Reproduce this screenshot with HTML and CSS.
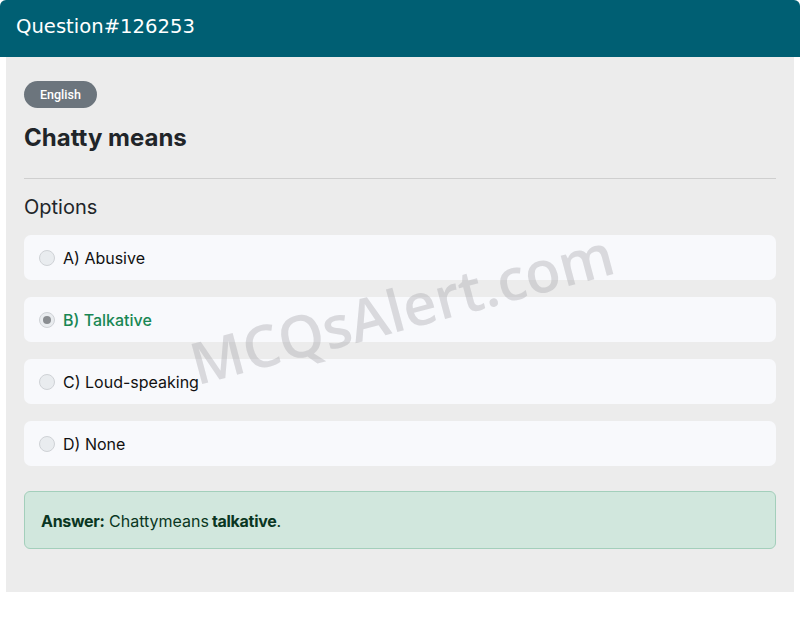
FILE: index.html
```html
<!DOCTYPE html>
<html lang="en">
<head>
<meta charset="utf-8">
<title>Question#126253</title>
<link rel="stylesheet" href="styles.css">
</head>
<body>
<div class="card">
  <div class="card-header">Question#126253</div>
  <div class="card-body">
    <span class="badge">English</span>
    <h1 class="title">Chatty means</h1>
    <hr class="rule">
    <h2 class="subtitle">Options</h2>
    <div class="options">
      <div class="option"><span class="radio"></span><span class="label">A) Abusive</span></div>
      <div class="option correct"><span class="radio checked"></span><span class="label">B) Talkative</span></div>
      <div class="option"><span class="radio"></span><span class="label">C) Loud-speaking</span></div>
      <div class="option"><span class="radio"></span><span class="label">D) None</span></div>
    </div>
    <div class="answer"><strong>Answer:</strong>&nbsp;Chattymeans<strong class="gap">talkative</strong>.</div>
    <div class="watermark">MCQsAlert.com</div>
  </div>
</div>
</body>
</html>
```
FILE: styles.css
```css
* { box-sizing: border-box; }
html, body { margin: 0; padding: 0; background: #fff; }
body { font-family: "Inter", "DejaVu Sans", sans-serif; color: #212529; }

.card { width: 800px; position: relative; }

.card-header {
  height: 57px;
  background: #005f73;
  color: #fff;
  font-family: "DejaVu Sans", sans-serif;
  font-size: 19.6px;
  padding: 15px 16px 0;
  border-radius: 6px 6px 0 0;
}

.card-body {
  position: relative;
  margin: 0 6px;
  background: #ececec;
  padding: 24px 18px 43px;
  overflow: hidden;
}

.badge {
  display: inline-block;
  background: #6c757d;
  color: #fff;
  font-family: "Roboto", sans-serif;
  font-weight: 500;
  font-size: 12.5px;
  height: 27px;
  line-height: 27px;
  padding: 0 16px;
  border-radius: 14px;
}

.title {
  margin: 14px 0 0;
  font-size: 24px;
  font-weight: 700;
  line-height: 32px;
  color: #212529;
}

.rule {
  margin: 24px 0 0;
  border: 0;
  border-top: 1px solid #cfcfcf;
}

.subtitle {
  margin: 15px 0 0;
  font-size: 20px;
  font-weight: 400;
  line-height: 26px;
}

.options {
  margin-top: 15px;
  display: flex;
  flex-direction: column;
  gap: 17px;
}

.option {
  height: 45px;
  background: #f8f9fc;
  border-radius: 7px;
  display: flex;
  align-items: center;
  padding-left: 15px;
  gap: 8px;
  font-size: 16px;
  color: #111;
}

.radio {
  width: 16px;
  height: 16px;
  border-radius: 50%;
  border: 1px solid #cfd2d6;
  background: #e9ecef;
  position: relative;
  flex: none;
}
.radio.checked::after {
  content: "";
  position: absolute;
  left: 3px; top: 3px;
  width: 8px; height: 8px;
  border-radius: 50%;
  background: #8a8d91;
}

.option.correct .label { color: #198754; font-weight: 500; }

.answer {
  margin-top: 25px;
  height: 58px;
  background: #d1e7dd;
  border: 1px solid #a3cfbb;
  border-radius: 6px;
  color: #0a3622;
  font-size: 16px;
  display: flex;
  align-items: center;
  padding-left: 16px;
  padding-top: 2px;
}
.answer strong { font-weight: 700; letter-spacing: -0.3px; }
.answer .gap { margin-left: 3px; }

.watermark {
  position: absolute;
  left: 178px;
  top: 222px;
  font-family: "Open Sans", sans-serif;
  font-weight: 600;
  font-size: 58px;
  line-height: 1;
  color: rgba(165, 165, 172, 0.38);
  transform: rotate(-15deg);
  transform-origin: center;
  pointer-events: none;
  white-space: nowrap;
}
```
